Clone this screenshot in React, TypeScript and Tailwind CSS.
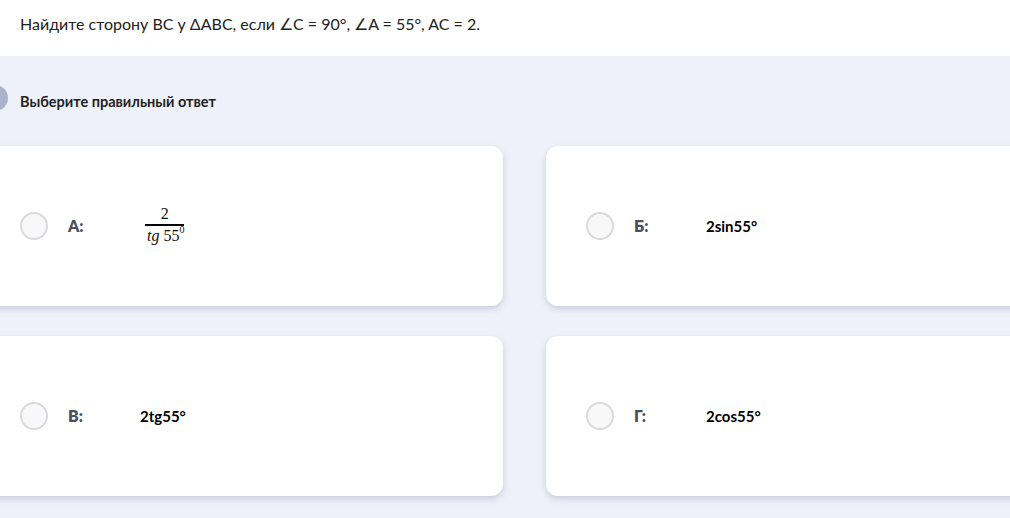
import React from "react"

type Option = {
  letter: string
  value: React.ReactNode
}

const Fraction = () => (
  <div className="ml-[5px] -mt-[3px] flex flex-col items-center font-['Liberation_Serif',serif] text-[16px] font-normal leading-none text-[#111]">
    <span className="pb-[2px]">2</span>
    <span className="w-[39px] border-t-[2px] border-black" />
    <span className="pt-[2px] pl-[2px] flex items-start">
      <i>tg</i>&nbsp;55<span className="text-[10px] -mt-[3px]">0</span>
    </span>
  </div>
)

const options: Option[] = [
  { letter: "А:", value: <Fraction /> },
  { letter: "Б:", value: "2sin55°" },
  { letter: "В:", value: "2tg55°" },
  { letter: "Г:", value: "2cos55°" },
]

const Card = ({ letter, value }: Option) => (
  <div className="h-[160px] rounded-[12px] bg-white shadow-[0_3px_6px_rgba(160,165,185,0.45)] flex items-center pl-[40px]">
    <span className="w-[28px] h-[28px] rounded-full border-[2px] border-[#d9dadd] bg-[#f8f8f9] shrink-0" />
    <span className="ml-[20px] w-[72px] text-[16px] font-extrabold text-[#4a5162]">{letter}</span>
    <div className="text-[15px] font-bold text-black">{value}</div>
  </div>
)

export default function App() {
  return (
    <div className="w-[1010px] h-[518px] overflow-hidden bg-[#eef1f9] font-['Lato','Noto_Sans',sans-serif]">
      <div className="h-[56px] bg-white flex items-center px-[20px] pb-[9px]">
        <p className="text-[16px] text-[#222]">
          Найдите сторону BC у ΔABC, если ∠C = 90°, ∠A = 55°, AC = 2.
        </p>
      </div>
      <div className="flex items-center h-[90px] pt-[2px]">
        <span className="-ml-[18px] -mt-[8px] w-[26px] h-[26px] rounded-full bg-[#aab3cb] shrink-0" />
        <span className="ml-[12px] text-[14.5px] font-bold text-[#222]">Выберите правильный ответ</span>
      </div>
      <div className="-ml-[20px] w-[1089px] grid grid-cols-[523px_523px] gap-x-[43px] gap-y-[30px]">
        {options.map((o) => (
          <Card key={o.letter} {...o} />
        ))}
      </div>
    </div>
  )
}
